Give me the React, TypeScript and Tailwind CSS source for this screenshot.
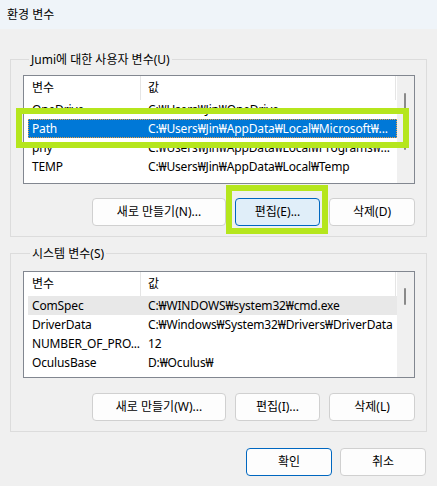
type Row = { name: string; value: string };

const userRows: Row[] = [
  { name: "OneDrive", value: "C:₩Users₩Jin₩OneDrive" },
  { name: "Path", value: "C:₩Users₩Jin₩AppData₩Local₩Microsoft₩..." },
  { name: "phy", value: "C:₩Users₩Jin₩AppData₩Local₩Programs₩..." },
  { name: "TEMP", value: "C:₩Users₩Jin₩AppData₩Local₩Temp" },
];

const systemRows: Row[] = [
  { name: "ComSpec", value: "C:₩WINDOWS₩system32₩cmd.exe" },
  { name: "DriverData", value: "C:₩Windows₩System32₩Drivers₩DriverData" },
  { name: "NUMBER_OF_PRO...", value: "12" },
  { name: "OculusBase", value: "D:₩Oculus₩" },
];

function VarList({
  rows,
  selected,
  hover,
  thumbTop,
  thumbHeight,
  height,
}: {
  rows: Row[];
  selected?: number;
  hover?: number;
  thumbTop: number;
  thumbHeight: number;
  height: string;
}) {
  return (
    <div className={`flex w-[392px] ${height} overflow-hidden border border-[#828790] bg-white`}>
      <div className="flex min-w-0 flex-1 flex-col">
        <div className="flex h-[24px] shrink-0 items-center">
          <div className="flex h-full w-[117px] items-center border-r border-[#e5e5e5] pl-[8px]">변수</div>
          <div className="flex h-full w-[255px] items-center border-r border-[#e5e5e5] pl-[7px]">값</div>
        </div>
        {rows.map((r, i) => (
          <div
            key={r.name}
            className={`ml-[4px] flex h-[19px] shrink-0 items-center whitespace-nowrap tracking-[-0.15px] ${
              i === selected
                ? "bg-[#0078d7] text-white outline-1 -outline-offset-1 outline-dotted outline-[#f0a040]"
                : i === hover
                ? "bg-[#e8e8e8]"
                : ""
            }`}
          >
            <div className="w-[120px] shrink-0 overflow-hidden pl-[4px]">{r.name}</div>
            <div className="min-w-0 flex-1 overflow-hidden">{r.value}</div>
          </div>
        ))}
      </div>
      <div className="w-[17px] shrink-0 bg-[#f0f0f0] pl-[7px]" style={{ paddingTop: thumbTop }}>
        <div className="w-[2px] rounded-full bg-[#8a8a8a]" style={{ height: thumbHeight }} />
      </div>
    </div>
  );
}

function Btn({ children, w, active }: { children: React.ReactNode; w: string; active?: boolean }) {
  return (
    <button
      className={`${w} h-[28px] rounded-[4px] border ${
        active ? "border-[#0067c0] bg-[#e0eef9]" : "border-[#d0d0d0] bg-[#fdfdfd]"
      } text-[12px] text-black`}
    >
      {children}
    </button>
  );
}

export default function App() {
  return (
    <div className="relative h-[486px] w-[437px] overflow-hidden bg-[#f0f0f0] font-['Noto_Sans','Noto_Sans_CJK_KR',sans-serif] text-[12px] text-black">
      <div className="flex h-[29px] items-center bg-[#eff4f9] px-[7px]">환경 변수</div>

      <fieldset className="mx-[10px] mt-[22px] w-[417px] border border-[#dcdcdc] pb-[10px] pl-[12px] pr-[11px] pt-[7px]">
        <legend className="ml-[6px] px-[2px] leading-[17px]">Jumi에 대한 사용자 변수(U)</legend>
        <VarList rows={userRows} selected={1} thumbTop={17} thumbHeight={57} height="h-[109px]" />
        <div className="mt-[14px] flex justify-end gap-[9px]">
          <Btn w="w-[134px]">새로 만들기(N)...</Btn>
          <Btn w="w-[85px]" active>
            편집(E)...
          </Btn>
          <Btn w="w-[86px]">삭제(D)</Btn>
        </div>
      </fieldset>

      <fieldset className="mx-[10px] mt-[8px] w-[417px] border border-[#dcdcdc] pb-[10px] pl-[12px] pr-[11px] pt-[9px]">
        <legend className="ml-[7px] px-[2px] leading-[17px]">시스템 변수(S)</legend>
        <VarList rows={systemRows} hover={0} thumbTop={16} thumbHeight={17} height="h-[107px]" />
        <div className="mt-[15px] flex justify-end gap-[9px]">
          <Btn w="w-[134px]">새로 만들기(W)...</Btn>
          <Btn w="w-[85px]">편집(I)...</Btn>
          <Btn w="w-[86px]">삭제(L)</Btn>
        </div>
      </fieldset>

      <div className="mr-[11px] mt-[16px] flex justify-end gap-[8px]">
        <button className="h-[28px] w-[86px] rounded-[4px] border border-[#0067c0] bg-[#fdfdfd] text-[12px]">확인</button>
        <Btn w="w-[86px]">취소</Btn>
      </div>

      <div className="absolute left-[16px] top-[108px] h-[40px] w-[393px] border-[6px] border-[#b5e61d]" />
      <div className="absolute left-[226px] top-[185px] h-[49px] w-[102px] border-[6px] border-[#b5e61d]" />
    </div>
  );
}
